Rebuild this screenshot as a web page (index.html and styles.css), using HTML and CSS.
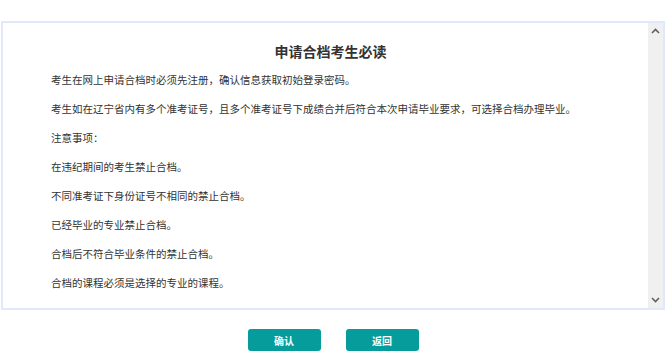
FILE: index.html
```html
<!DOCTYPE html>
<html lang="zh-CN">
<head>
<meta charset="utf-8">
<title>申请合档考生必读</title>
<link rel="stylesheet" href="styles.css">
</head>
<body>
<div class="page">
  <div class="panel">
    <div class="content">
      <h1 class="title">申请合档考生必读</h1>
      <p class="para">考生在网上申请合档时必须先注册，确认信息获取初始登录密码。</p>
      <p class="para">考生如在辽宁省内有多个准考证号，且多个准考证号下成绩合并后符合本次申请毕业要求，可选择合档办理毕业。</p>
      <p class="para">注意事项：</p>
      <p class="para">在违纪期间的考生禁止合档。</p>
      <p class="para">不同准考证下身份证号不相同的禁止合档。</p>
      <p class="para">已经毕业的专业禁止合档。</p>
      <p class="para">合档后不符合毕业条件的禁止合档。</p>
      <p class="para">合档的课程必须是选择的专业的课程。</p>
    </div>
    <div class="scrollbar">
      <svg class="arrow" width="9" height="6" viewBox="0 0 9 6"><path d="M1 5 L4.5 1.5 L8 5" fill="none" stroke="#606060" stroke-width="1.6"/></svg>
      <svg class="arrow" width="9" height="6" viewBox="0 0 9 6"><path d="M1 1 L4.5 4.5 L8 1" fill="none" stroke="#606060" stroke-width="1.6"/></svg>
    </div>
  </div>
  <div class="actions">
    <button class="btn">确认</button>
    <button class="btn">返回</button>
  </div>
</div>
</body>
</html>
```
FILE: styles.css
```css
html, body {
  margin: 0;
  padding: 0;
  background: #ffffff;
}
body {
  font-family: "Noto Sans CJK SC", "Noto Sans", sans-serif;
  color: #333333;
}
.page {
  padding-top: 21px;
}
.panel {
  margin: 0 1px;
  height: 289px;
  border: 2px solid #dfe9fb;
  box-sizing: border-box;
  display: flex;
}
.content {
  flex: 1;
  overflow: hidden;
  padding: 0 38px 0 48px;
}
.title {
  margin: 18px 0 0 0;
  font-size: 14px;
  line-height: 20px;
  font-weight: bold;
  text-align: center;
  color: #333333;
}
.para {
  margin: 11px 0 14px 0;
  font-size: 10.5px;
  line-height: 15px;
  color: #333333;
  white-space: nowrap;
}
.para + .para {
  margin-top: 0;
}
.scrollbar {
  width: 15px;
  background: #f0f0f0;
  display: flex;
  flex-direction: column;
  justify-content: space-between;
  align-items: center;
  padding: 5px 0 5px;
}
.arrow {
  display: block;
}
.actions {
  display: flex;
  justify-content: center;
  gap: 25px;
  margin-top: 19px;
}
.btn {
  width: 73px;
  height: 22px;
  border: none;
  border-radius: 3px;
  background: #079c9c;
  color: #ffffff;
  font-family: "Noto Sans CJK SC", sans-serif;
  font-size: 10px;
  font-weight: bold;
  padding: 0;
}
```
